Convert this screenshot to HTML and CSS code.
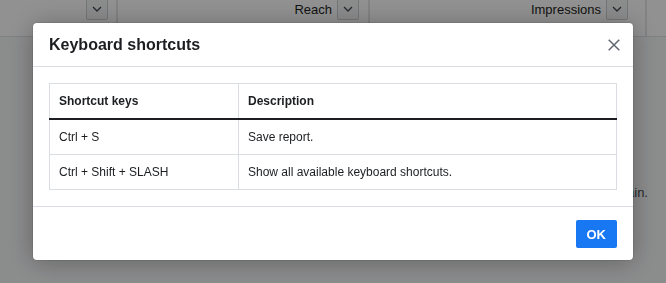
FILE: index.html
```html
<!DOCTYPE html>
<html lang="en">
<head>
<meta charset="utf-8">
<title>Keyboard shortcuts</title>
<link rel="stylesheet" href="styles.css">
</head>
<body>
<div class="page">
  <div class="thead">
    <div class="th c1">
      <span class="sort"><svg width="10" height="6" viewBox="0 0 10 6"><path d="M1 1l4 4 4-4" fill="none" stroke="#444950" stroke-width="1.3"/></svg></span>
    </div>
    <div class="th c2">
      <span class="label">Reach</span>
      <span class="sort"><svg width="10" height="6" viewBox="0 0 10 6"><path d="M1 1l4 4 4-4" fill="none" stroke="#444950" stroke-width="1.3"/></svg></span>
    </div>
    <div class="th c3">
      <span class="label">Impressions</span>
      <span class="sort"><svg width="10" height="6" viewBox="0 0 10 6"><path d="M1 1l4 4 4-4" fill="none" stroke="#444950" stroke-width="1.3"/></svg></span>
    </div>
    <div class="th c4"></div>
  </div>
  <p class="empty">No results found. Please try again.</p>
</div>

<div class="overlay"></div>

<div class="modal-layer">
  <div class="modal" role="dialog" aria-label="Keyboard shortcuts">
    <div class="modal-header">
      <h2 class="modal-title">Keyboard shortcuts</h2>
      <span class="close" aria-label="Close"><svg width="12" height="12" viewBox="0 0 12 12"><path d="M0.7 0.7L11.3 11.3M11.3 0.7L0.7 11.3" stroke="#606770" stroke-width="1.5" fill="none"/></svg></span>
    </div>
    <div class="modal-body">
      <table class="shortcuts">
        <colgroup><col class="col-keys"><col></colgroup>
        <thead>
          <tr><th>Shortcut keys</th><th>Description</th></tr>
        </thead>
        <tbody>
          <tr><td>Ctrl + S</td><td>Save report.</td></tr>
          <tr><td>Ctrl + Shift + SLASH</td><td>Show all available keyboard shortcuts.</td></tr>
        </tbody>
      </table>
    </div>
    <div class="modal-footer">
      <button class="ok">OK</button>
    </div>
  </div>
</div>
</body>
</html>
```

FILE: styles.css
```css
html, body {
  margin: 0;
  padding: 0;
}
body {
  width: 666px;
  height: 283px;
  overflow: hidden;
  background: #f5f6f7;
  font-family: "Liberation Sans", Arial, sans-serif;
  color: #1c1e21;
}

/* underlying page */
.page {
  height: 283px;
}
.thead {
  display: grid;
  grid-template-columns: 118px 252px 277px 1fr;
  height: 36px;
  background: #fff;
  border-bottom: 1px solid #dddfe2;
}
.th {
  display: flex;
  justify-content: flex-end;
  align-items: flex-start;
  gap: 5px;
  border-right: 2px solid #e4e6e9;
  padding-right: 8px;
  font-size: 13px;
  color: #1c1e21;
}
.c2 { padding-right: 9px; }
.c3 { padding-right: 17px; }
.c4 { border-right: none; }
.label {
  line-height: 18px;
  margin-top: 1px;
}
.sort {
  width: 22px;
  height: 23px;
  margin-top: -3px;
  box-sizing: border-box;
  border: 1px solid #ccd0d5;
  border-radius: 2px;
  background: #f5f6f7;
  display: flex;
  align-items: center;
  justify-content: center;
}
.empty {
  margin: 0;
  padding: 148px 18px 0 0;
  text-align: right;
  font-size: 13px;
  color: #444950;
}

/* overlay */
.overlay {
  position: fixed;
  inset: 0;
  background: rgba(0, 0, 0, 0.43);
}
.modal-layer {
  position: fixed;
  inset: 0;
  display: flex;
  justify-content: center;
  align-items: flex-start;
  padding-top: 23px;
}
.modal {
  width: 600px;
  background: #fff;
  border-radius: 4px;
  box-shadow: 0 2px 26px rgba(0, 0, 0, 0.3), 0 0 0 1px rgba(0, 0, 0, 0.08);
}
.modal-header {
  height: 43px;
  border-bottom: 1px solid #dadde1;
  display: flex;
  align-items: center;
  justify-content: space-between;
  padding: 0 13px 0 16px;
}
.modal-title {
  margin: 0;
  font-size: 16px;
  font-weight: bold;
  color: #1c1e21;
  line-height: 20px;
}
.close {
  display: flex;
  width: 12px;
  height: 12px;
}
.modal-body {
  padding: 16px;
}
.shortcuts {
  width: 100%;
  border-collapse: collapse;
  table-layout: fixed;
  border: 1px solid #dadde1;
  font-size: 12px;
}
.col-keys {
  width: 189px;
}
.shortcuts th,
.shortcuts td {
  text-align: left;
  padding: 0 9px;
  border-left: 1px solid #dadde1;
  vertical-align: middle;
}
.shortcuts th {
  height: 34px;
  font-weight: bold;
  border-bottom: 2px solid #1c1e21;
}
.shortcuts td {
  height: 34px;
  border-top: 1px solid #dadde1;
}
.modal-footer {
  border-top: 1px solid #dadde1;
  display: flex;
  justify-content: flex-end;
  padding: 13px 16px 12px;
}
.ok {
  height: 28px;
  padding: 0 11px;
  border: none;
  border-radius: 2px;
  background: #1877f2;
  color: #fff;
  font-family: "Liberation Sans", Arial, sans-serif;
  font-size: 13px;
  font-weight: bold;
}
```
